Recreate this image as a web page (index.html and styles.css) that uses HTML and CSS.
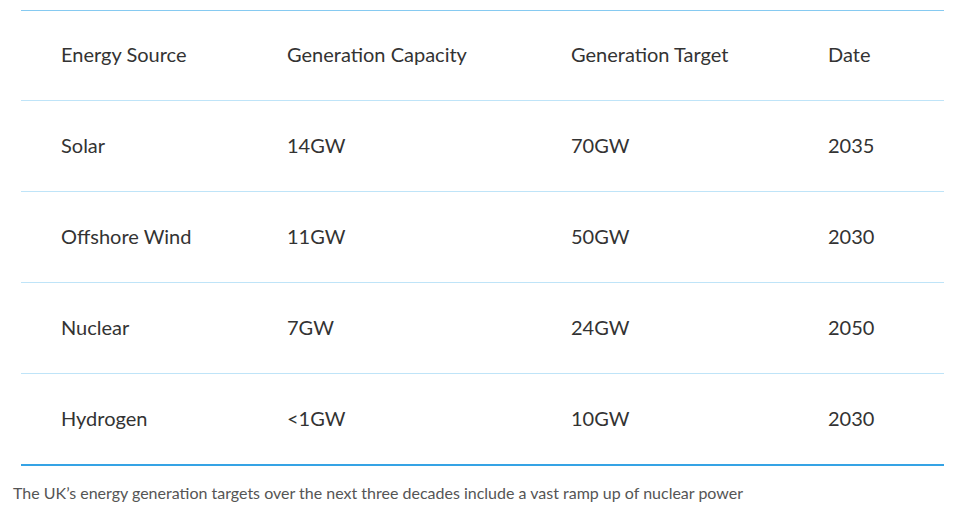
FILE: index.html
```html
<!DOCTYPE html>
<html lang="en">
<head>
<meta charset="utf-8">
<title>UK energy generation targets</title>
<link rel="stylesheet" href="styles.css">
</head>
<body>
<figure class="figure">
  <table class="energy-table">
    <thead>
      <tr>
        <th>Energy Source</th>
        <th>Generation Capacity</th>
        <th>Generation Target</th>
        <th>Date</th>
      </tr>
    </thead>
    <tbody>
      <tr><td>Solar</td><td>14GW</td><td>70GW</td><td>2035</td></tr>
      <tr><td>Offshore Wind</td><td>11GW</td><td>50GW</td><td>2030</td></tr>
      <tr><td>Nuclear</td><td>7GW</td><td>24GW</td><td>2050</td></tr>
      <tr><td>Hydrogen</td><td>&lt;1GW</td><td>10GW</td><td>2030</td></tr>
    </tbody>
  </table>
  <figcaption class="caption">The UK’s energy generation targets over the next three decades include a vast ramp up of nuclear power</figcaption>
</figure>
</body>
</html>
```
FILE: styles.css
```css
html, body {
  margin: 0;
  padding: 0;
  background: #ffffff;
}
.figure {
  margin: 0;
  padding: 10px 16px 0 13px;
  font-family: Lato, "Open Sans", sans-serif;
}
.energy-table {
  margin-left: 8px;
  width: 923px;
  border-collapse: collapse;
  border-top: 1px solid #86caf1;
  border-bottom: 2px solid #35a3e5;
  color: #333333;
  font-size: 20px;
}
.energy-table th,
.energy-table td {
  font-weight: 400;
  text-align: left;
  padding: 0 0 0 40px;
  vertical-align: middle;
  box-sizing: border-box;
}
.energy-table th {
  height: 90px;
  padding-bottom: 3px;
}
.energy-table td {
  height: 91px;
  padding-bottom: 2px;
}
.energy-table tbody tr {
  border-top: 1px solid #bfe4f8;
}
.energy-table th:nth-child(1) { width: 226px; }
.energy-table th:nth-child(2) { width: 284px; }
.energy-table th:nth-child(3) { width: 257px; }
.caption {
  margin: 17px 0 0 0;
  color: #555555;
  font-size: 16px;
}
```
